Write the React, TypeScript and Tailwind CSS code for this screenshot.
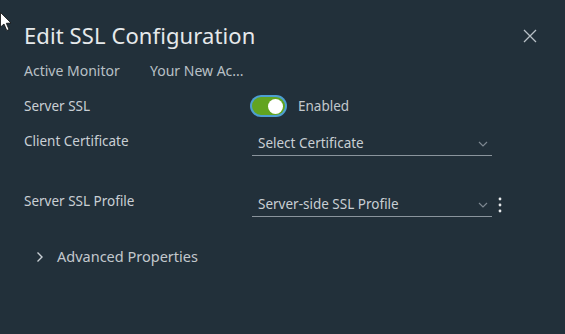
import React from "react";

function Chevron() {
  return (
    <svg width="10" height="6" viewBox="0 0 10 6" className="shrink-0">
      <path d="M1 1 L5 5 L9 1" fill="none" stroke="#7d8790" strokeWidth="1.2" />
    </svg>
  );
}

export default function App() {
  return (
    <div
      className="relative w-[565px] h-[334px] overflow-hidden bg-[#22303a] text-[#c9cfd4]"
      style={{ fontFamily: "'Noto Sans', 'Open Sans', sans-serif" }}
    >
      {/* mouse cursor */}
      <svg className="absolute left-0 top-[12px]" width="14" height="22" viewBox="0 0 14 22">
        <path d="M0.5 0.5 L0.5 15 L4 12 L6.8 18.5 L9 17.5 L6.3 11.3 L11 11 Z" fill="#ffffff" stroke="#111" strokeWidth="0.8" />
      </svg>

      <div className="flex flex-col pl-[24px] pr-[24px]">
        <div className="flex items-center justify-between h-[38px] mt-[16px]">
          <div className="text-[22px] text-[#e6e9eb] tracking-[0.1px]">Edit SSL Configuration</div>
          <svg width="14" height="14" viewBox="0 0 14 14" className="mr-[4px] mt-[2px]">
            <path d="M1 1 L13 13 M13 1 L1 13" stroke="#b8c0c6" strokeWidth="1.3" />
          </svg>
        </div>

        <div className="flex items-center h-[20px] mt-[6px] text-[14px] text-[#b9c0c6]">
          <span className="w-[126px]">Active Monitor</span>
          <span>Your New Ac...</span>
        </div>

        <div className="flex items-center h-[24px] mt-[14px] text-[13.5px]">
          <span className="w-[226px]">Server SSL</span>
          <div className="w-[37px] h-[22px] rounded-full bg-[#4d9fd0] p-[2px] shrink-0">
            <div className="w-full h-full rounded-full bg-[#62a420] flex items-center justify-end pr-[2px]">
              <div className="w-[15px] h-[15px] rounded-full bg-white" />
            </div>
          </div>
          <span className="ml-[11px] text-[13.5px] text-[#c2c8cd]">Enabled</span>
        </div>

        <div className="flex items-start mt-[13px] text-[13.5px]">
          <span className="w-[228px] leading-[20px]">Client Certificate</span>
          <div className="w-[240px] h-[24px] border-b border-[#8a949c] flex items-center justify-between pl-[6px] pr-[4px] mt-[1px]">
            <span className="text-[#c9cfd4]">Select Certificate</span>
            <Chevron />
          </div>
        </div>

        <div className="flex items-start mt-[35px] text-[13.5px]">
          <span className="w-[228px] leading-[20px]">Server SSL Profile</span>
          <div className="w-[240px] h-[24px] border-b border-[#8a949c] flex items-center justify-between pl-[6px] pr-[4px] mt-[2px]">
            <span className="text-[#c9cfd4]">Server-side SSL Profile</span>
            <Chevron />
          </div>
          <svg width="6" height="18" viewBox="0 0 6 18" className="ml-[5px] mt-[5px]">
            <circle cx="3" cy="3" r="1.4" fill="#e6e9eb" />
            <circle cx="3" cy="9" r="1.4" fill="#e6e9eb" />
            <circle cx="3" cy="15" r="1.4" fill="#e6e9eb" />
          </svg>
        </div>

        <div className="flex items-center mt-[28px] pl-[12px] h-[24px]">
          <svg width="8" height="12" viewBox="0 0 8 12" className="mr-[13px]">
            <path d="M1.5 1.5 L6 6 L1.5 10.5" fill="none" stroke="#c9cfd4" strokeWidth="1.4" />
          </svg>
          <span className="text-[14.5px] text-[#c2c8cd]">Advanced Properties</span>
        </div>
      </div>
    </div>
  );
}
